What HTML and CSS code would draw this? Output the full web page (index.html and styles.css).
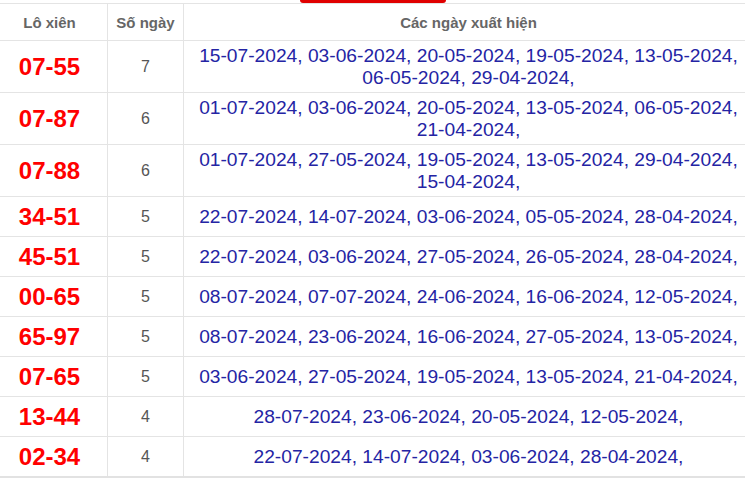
FILE: index.html
```html
<!DOCTYPE html>
<html>
<head>
  <meta charset="utf-8">
  <title>Lô xiên</title>
  <link rel="stylesheet" href="styles.css">
</head>
<body>
  <!-- tab strip above the table -->
  <div class="tab-strip">
    <div class="tab-active"></div>
  </div>

  <table class="xien-table">
    <thead>
      <tr>
        <th class="col-pair">Lô xiên</th>
        <th class="col-count">Số ngày</th>
        <th class="col-dates">Các ngày xuất hiện</th>
      </tr>
    </thead>
    <tbody>
      <tr>
        <td class="pair">07-55</td>
        <td class="count">7</td>
        <td class="dates">15-07-2024, 03-06-2024, 20-05-2024, 19-05-2024, 13-05-2024, 06-05-2024, 29-04-2024,</td>
      </tr>
      <tr>
        <td class="pair">07-87</td>
        <td class="count">6</td>
        <td class="dates">01-07-2024, 03-06-2024, 20-05-2024, 13-05-2024, 06-05-2024, 21-04-2024,</td>
      </tr>
      <tr>
        <td class="pair">07-88</td>
        <td class="count">6</td>
        <td class="dates">01-07-2024, 27-05-2024, 19-05-2024, 13-05-2024, 29-04-2024, 15-04-2024,</td>
      </tr>
      <tr>
        <td class="pair">34-51</td>
        <td class="count">5</td>
        <td class="dates">22-07-2024, 14-07-2024, 03-06-2024, 05-05-2024, 28-04-2024,</td>
      </tr>
      <tr>
        <td class="pair">45-51</td>
        <td class="count">5</td>
        <td class="dates">22-07-2024, 03-06-2024, 27-05-2024, 26-05-2024, 28-04-2024,</td>
      </tr>
      <tr>
        <td class="pair">00-65</td>
        <td class="count">5</td>
        <td class="dates">08-07-2024, 07-07-2024, 24-06-2024, 16-06-2024, 12-05-2024,</td>
      </tr>
      <tr>
        <td class="pair">65-97</td>
        <td class="count">5</td>
        <td class="dates">08-07-2024, 23-06-2024, 16-06-2024, 27-05-2024, 13-05-2024,</td>
      </tr>
      <tr>
        <td class="pair">07-65</td>
        <td class="count">5</td>
        <td class="dates">03-06-2024, 27-05-2024, 19-05-2024, 13-05-2024, 21-04-2024,</td>
      </tr>
      <tr>
        <td class="pair">13-44</td>
        <td class="count">4</td>
        <td class="dates">28-07-2024, 23-06-2024, 20-05-2024, 12-05-2024,</td>
      </tr>
      <tr>
        <td class="pair">02-34</td>
        <td class="count">4</td>
        <td class="dates">22-07-2024, 14-07-2024, 03-06-2024, 28-04-2024,</td>
      </tr>
    </tbody>
  </table>
</body>
</html>
```

FILE: styles.css
```css
html, body { overflow: hidden; }
body {
  margin: 0;
  font-family: "Liberation Sans", Arial, sans-serif;
  background: #fff;
}

/* red tab, only its lower edge shows */
.tab-strip { height: 3px; }
.tab-active {
  margin-left: 300px;
  width: 146px;
  height: 3px;
  background-color: #e00000;
  border-radius: 0 0 6px 6px;
}

.xien-table {
  border-collapse: collapse;
  margin-left: -9px;
  width: 763px;
  table-layout: fixed;
  border-bottom: 2px solid #e2e2e2;
}
.xien-table th,
.xien-table td {
  border: 1px solid #e4e4e4;
  text-align: center;
  vertical-align: middle;
}
.xien-table th {
  height: 36px;
  padding: 0;
  font-size: 15px;
  font-weight: bold;
  color: #666;
}
.xien-table td { padding: 4px 4px; }

.col-pair { width: 115px; }
.col-count { width: 75px; }

.pair {
  font-size: 24px;
  font-weight: bold;
  line-height: 31px;
  color: #ff0000;
}
.count {
  font-size: 16px;
  color: #555;
}
.dates {
  font-size: 19.2px;
  line-height: 21.5px;
  color: #2424a4;
}
```
